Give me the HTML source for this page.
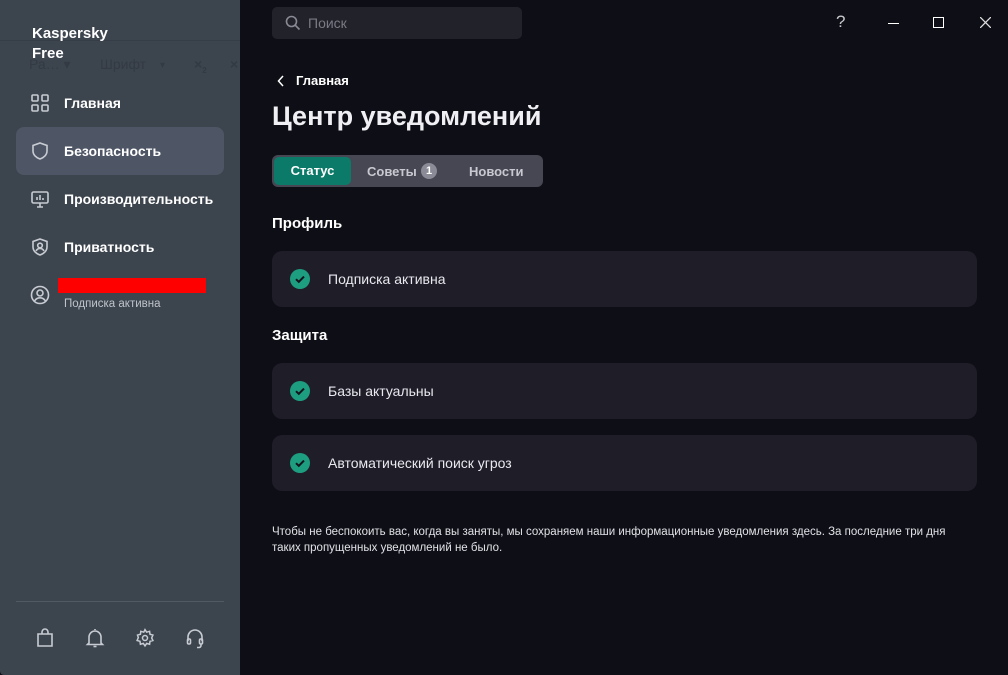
<!DOCTYPE html>
<html><head><meta charset="utf-8"><style>
*{box-sizing:border-box;margin:0;padding:0}
body{width:1008px;height:675px;overflow:hidden;background:#0e0e16;font-family:"Liberation Sans",sans-serif;position:relative;color:#fff}
.side{position:absolute;left:0;top:0;width:240px;height:675px;background:#3c444e;border-radius:0 0 0 4px}
.ghost{position:absolute;top:56px;font-size:14px;color:#333a44}
.logo{position:absolute;left:32px;top:24px;font-size:15px;font-weight:bold;line-height:20px;color:#fff}
.nav{position:absolute;left:16px;width:208px;height:48px;border-radius:8px;display:flex;align-items:center;font-size:14px;font-weight:bold;color:#fff}
.nav svg{position:absolute;left:14px}
.nav span{position:absolute;left:48px}
.act{background:#4e5666}
.main{position:absolute;left:240px;top:0;right:0;bottom:0}
.search{position:absolute;left:32px;top:7px;width:250px;height:32px;background:#22222b;border-radius:5px;color:#7a7a84;font-size:14px}
.card{position:absolute;left:32px;width:705px;height:56px;background:#1e1d28;border-radius:10px;font-size:14px;color:#e8e8ee}
.card .ck{position:absolute;left:18px;top:18px;width:20px;height:20px;border-radius:50%;background:#1e9e80}
.card span{position:absolute;left:56px;top:20px}
h2{position:absolute;left:32px;font-size:15px;font-weight:bold}
</style></head><body>
<div class="side">
 <div style="position:absolute;left:0;top:40px;width:240px;height:1px;background:#363d47"></div>
 <div class="ghost" style="left:29px">Ра… ▾</div>
 <div class="ghost" style="left:100px">Шрифт</div>
 <div class="ghost" style="left:160px;font-size:10px;top:60px">▾</div>
 <div class="ghost" style="left:194px;font-weight:bold">×<sub style="font-size:8px">2</sub></div>
 <div class="ghost" style="left:230px;font-weight:bold">×</div>
 <div class="logo">Kaspersky<br>Free</div>
 <div class="nav" style="top:79px"><svg width="20" height="20" viewBox="0 0 20 20" fill="none" stroke="#c8ccd2" stroke-width="1.6"><rect x="2" y="2" width="6" height="6" rx="1"/><rect x="12" y="2" width="6" height="6" rx="1"/><rect x="2" y="12" width="6" height="6" rx="1"/><rect x="12" y="12" width="6" height="6" rx="1"/></svg><span>Главная</span></div>
 <div class="nav act" style="top:127px"><svg width="20" height="20" viewBox="0 0 20 20" fill="none" stroke="#c8ccd2" stroke-width="1.6"><path d="M10 2 L17 4.5 V10 C17 14 13.5 16.8 10 18 C6.5 16.8 3 14 3 10 V4.5 Z"/></svg><span>Безопасность</span></div>
 <div class="nav" style="top:175px"><svg width="20" height="20" viewBox="0 0 20 20" fill="none" stroke="#c8ccd2" stroke-width="1.6"><rect x="2" y="3" width="16" height="11" rx="1.5"/><path d="M7 11V8M10 11V6M13 11V9M7 18h6M10 14v4"/></svg><span>Производительность</span></div>
 <div class="nav" style="top:223px"><svg width="20" height="20" viewBox="0 0 20 20" fill="none" stroke="#c8ccd2" stroke-width="1.6"><path d="M10 2 L17 4.5 V10 C17 14 13.5 16.8 10 18 C6.5 16.8 3 14 3 10 V4.5 Z"/><circle cx="10" cy="8.5" r="2.3"/><path d="M6 14c1-2 2.5-2.6 4-2.6s3 .6 4 2.6"/></svg><span>Приватность</span></div>
 <svg style="position:absolute;left:30px;top:285px" width="20" height="20" viewBox="0 0 20 20" fill="none" stroke="#c8ccd2" stroke-width="1.6"><circle cx="10" cy="10" r="8.5"/><circle cx="10" cy="8" r="3"/><path d="M4.5 16c1.5-2.5 3.5-3.2 5.5-3.2s4 .7 5.5 3.2"/></svg>
 <div style="position:absolute;left:58px;top:278px;width:148px;height:15px;background:#ff0000"></div>
 <div style="position:absolute;left:64px;top:298px;font-size:11.5px;color:#c0c4ca">Подписка активна</div>
 <div style="position:absolute;left:16px;top:601px;width:208px;height:1px;background:#515964"></div>
 <svg style="position:absolute;left:35px;top:627px" width="20" height="22" viewBox="0 0 20 22" fill="none" stroke="#c8ccd2" stroke-width="1.6"><path d="M3 7h14v12H3z"/><path d="M7 7V5a3 3 0 016 0v2"/></svg>
 <svg style="position:absolute;left:85px;top:627px" width="20" height="22" viewBox="0 0 20 22" fill="none" stroke="#c8ccd2" stroke-width="1.6"><path d="M10 2v1M4 16V10a6 6 0 0112 0v6l1.5 1.5h-15z"/><path d="M8.5 19.5h3"/></svg>
 <svg style="position:absolute;left:135px;top:627px" width="20" height="22" viewBox="0 0 24 24" fill="none" stroke="#c8ccd2" stroke-width="1.8"><circle cx="12" cy="12" r="3"/><path d="M12 2l2 3 3.5-1 .5 3.5 3.5 1-1.5 3.5 1.5 3-3.5 1-.5 3.5-3.5-1-2 3-2-3-3.5 1-.5-3.5-3.5-1 1.5-3.5L3 8.5l3.5-1L7 4l3.5 1z"/></svg>
 <svg style="position:absolute;left:185px;top:627px" width="20" height="22" viewBox="0 0 20 22" fill="none" stroke="#c8ccd2" stroke-width="1.6"><path d="M3 14v-4a7 7 0 0114 0v4"/><rect x="2.5" y="12" width="3" height="5" rx="1.2"/><rect x="14.5" y="12" width="3" height="5" rx="1.2"/><path d="M16 17v1.5a2 2 0 01-2 2h-2"/></svg>
</div>
<div class="main">
 <div class="search"><svg style="position:absolute;left:13px;top:8px" width="16" height="16" viewBox="0 0 16 16" fill="none" stroke="#8a8a94" stroke-width="1.6"><circle cx="6.5" cy="6.5" r="5"/><path d="M10.2 10.2L14.5 14.5"/></svg><span style="position:absolute;left:36px;top:8px">Поиск</span></div>
 <div style="position:absolute;left:596px;top:12px;font-size:17px;color:#c8c8cc">?</div>
 <div style="position:absolute;left:648px;top:23px;width:11px;height:1px;background:#fff"></div>
 <div style="position:absolute;left:693px;top:17px;width:11px;height:11px;border:1.5px solid #fff"></div>
 <svg style="position:absolute;left:740px;top:17px" width="11" height="11" viewBox="0 0 11 11" stroke="#ddd" stroke-width="1.3"><path d="M0 0L11 11M11 0L0 11"/></svg>
 <svg style="position:absolute;left:37px;top:75px" width="8" height="12" viewBox="0 0 8 12" fill="none" stroke="#fff" stroke-width="1.5"><path d="M6 1L1.5 6 6 11"/></svg>
 <div style="position:absolute;left:56px;top:73px;font-size:13px;font-weight:bold">Главная</div>
 <div style="position:absolute;left:32px;top:101px;font-size:27px;font-weight:bold;color:#f0f0f4">Центр уведомлений</div>
 <div style="position:absolute;left:32px;top:155px;width:271px;height:32px;background:#474753;border-radius:6px;font-size:13px;font-weight:bold;color:#c8c8d0">
  <div style="position:absolute;left:2px;top:2px;width:77px;height:28px;background:#0b7a68;border-radius:5px;color:#fff;text-align:center;line-height:28px">Статус</div>
  <span style="position:absolute;left:95px;top:9px">Советы</span>
  <span style="position:absolute;left:149px;top:8px;width:16px;height:16px;border-radius:50%;background:#8b8b98;color:#fff;font-size:11px;text-align:center;line-height:16px">1</span>
  <span style="position:absolute;left:197px;top:9px">Новости</span>
 </div>
 <h2 style="top:215px">Профиль</h2>
 <div class="card" style="top:251px"><div class="ck"><svg width="20" height="20" viewBox="0 0 20 20" fill="none" stroke="#14141c" stroke-width="2"><path d="M6 10.2l2.8 2.6L14 7.6"/></svg></div><span>Подписка активна</span></div>
 <h2 style="top:327px">Защита</h2>
 <div class="card" style="top:363px"><div class="ck"><svg width="20" height="20" viewBox="0 0 20 20" fill="none" stroke="#14141c" stroke-width="2"><path d="M6 10.2l2.8 2.6L14 7.6"/></svg></div><span>Базы актуальны</span></div>
 <div class="card" style="top:435px"><div class="ck"><svg width="20" height="20" viewBox="0 0 20 20" fill="none" stroke="#14141c" stroke-width="2"><path d="M6 10.2l2.8 2.6L14 7.6"/></svg></div><span>Автоматический поиск угроз</span></div>
 <div style="position:absolute;left:32px;top:524px;width:700px;font-size:11.5px;line-height:16px;color:#e0e0e6">Чтобы не беспокоить вас, когда вы заняты, мы сохраняем наши информационные уведомления здесь. За последние три дня таких пропущенных уведомлений не было.</div>
</div>
</body></html>
